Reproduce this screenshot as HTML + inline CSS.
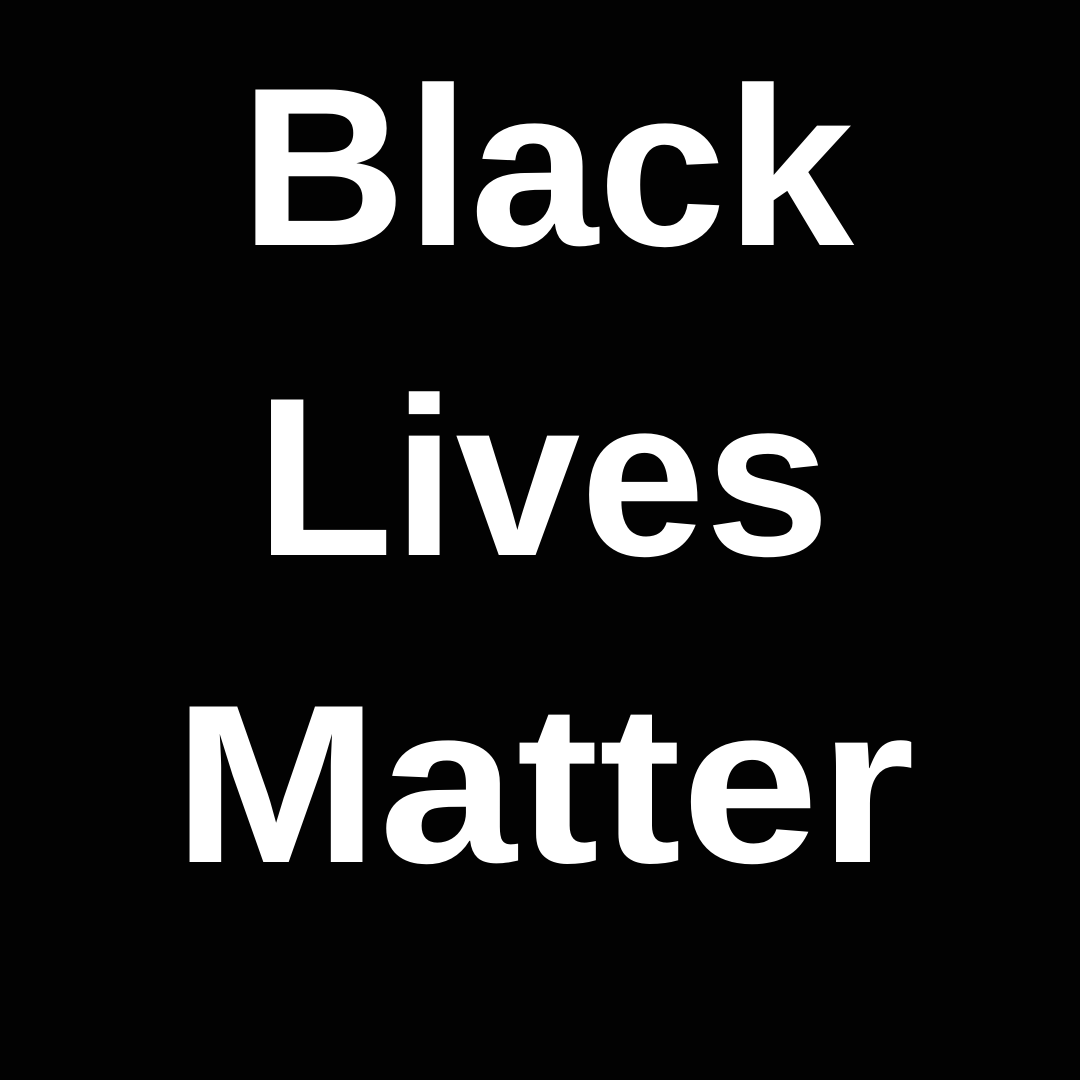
<!DOCTYPE html>
<html><head><style>
html,body{margin:0;padding:0;background:#000;}
svg{display:block}
text{font-family:"Liberation Sans",sans-serif;font-weight:bold;fill:#fff;font-size:226px}
</style></head><body>
<svg width="1080" height="1080" viewBox="0 0 1080 1080">
<rect width="1080" height="1080" fill="#020202"/>
<text x="240" y="245" textLength="614" lengthAdjust="spacingAndGlyphs">Black</text>
<text x="256" y="555" textLength="574" lengthAdjust="spacingAndGlyphs">Lives</text>
<text x="173" y="862" textLength="742" lengthAdjust="spacingAndGlyphs">Matter</text>
</svg>
</body></html>
